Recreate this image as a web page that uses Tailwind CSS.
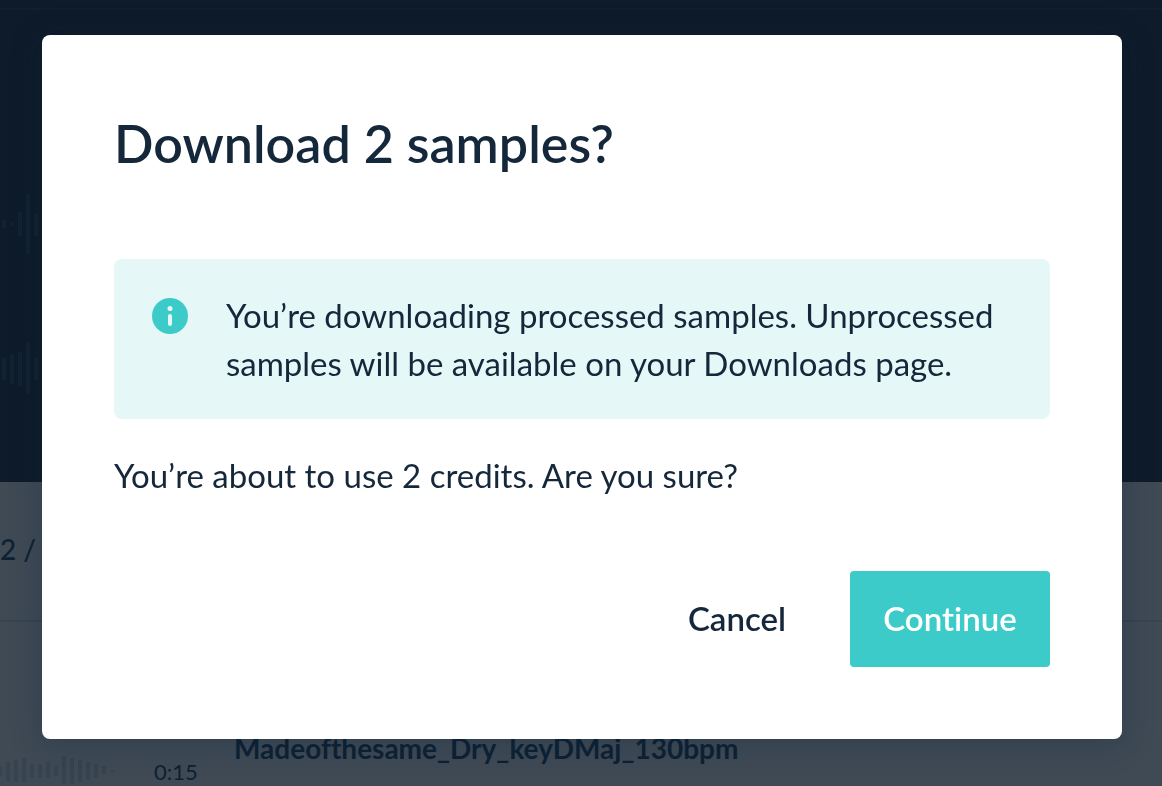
<!DOCTYPE html>
<html lang="en">
<head>
<meta charset="utf-8">
<meta name="viewport" content="width=device-width, initial-scale=1">
<title>Download samples</title>
<script src="https://cdn.jsdelivr.net/npm/@tailwindcss/browser@4"></script>
</head>
<body class="h-screen overflow-hidden bg-[#3f4a55] font-['Lato',sans-serif] text-[#0e2133] [font-variant-ligatures:none]">
  <!-- Dimmed page behind the dialog -->
  <div class="flex min-h-screen flex-col" aria-hidden="true">
    <section class="h-[482px] bg-[#0e1b2a] pt-2">
      <div class="border-t-2 border-[#12202e] pt-[184px] text-[#122231]">
        <svg class="block" width="40" height="60" viewBox="0 0 40 60" fill="currentColor">
          <rect x="2" y="26" width="4" height="8"/><rect x="10" y="28" width="4" height="4" rx="1"/><rect x="18" y="18" width="4" height="24"/><rect x="26" y="0" width="4" height="60"/><rect x="34" y="20" width="4" height="22"/>
        </svg>
        <svg class="mt-[88px] block" width="40" height="52" viewBox="0 0 40 52" fill="currentColor">
          <rect x="2" y="16" width="4" height="22"/><rect x="10" y="12" width="4" height="30"/><rect x="18" y="10" width="4" height="34"/><rect x="26" y="0" width="4" height="52"/><rect x="34" y="16" width="4" height="22"/>
        </svg>
      </div>
    </section>
    <section class="flex h-[140px] items-center border-b-2 border-[#374451] pb-1">
      <span class="text-[28px] font-medium leading-8">2 /</span>
    </section>
    <section class="flex pt-[110px]">
      <svg class="mt-6 block shrink-0 text-[#364350]" width="114" height="28" viewBox="0 0 114 28" fill="currentColor">
        <rect x="0" y="10" width="2" height="10"/><rect x="6" y="6" width="4" height="19"/><rect x="14" y="4" width="4" height="22"/><rect x="22" y="2" width="4" height="24"/><rect x="30" y="8" width="4" height="14"/><rect x="38" y="8" width="4" height="14"/><rect x="46" y="6" width="4" height="16"/><rect x="54" y="10" width="4" height="10"/><rect x="62" y="0" width="4" height="28"/><rect x="70" y="2" width="4" height="26"/><rect x="78" y="4" width="4" height="22"/><rect x="86" y="6" width="4" height="18"/><rect x="94" y="8" width="4" height="14"/><rect x="102" y="10" width="4" height="8"/><rect x="110" y="14" width="4" height="2"/>
      </svg>
      <span class="ml-10 mt-6 w-20 shrink-0 text-[22px] leading-8">0:15</span>
      <span class="text-[28px] font-bold leading-8">Madeofthesame_Dry_keyDMaj_130bpm</span>
    </section>
  </div>

  <div class="fixed inset-0 pt-[35px] pr-10 pl-[42px]">
    <div role="dialog" aria-modal="true" aria-labelledby="dialog-title" class="rounded-lg bg-white p-[72px] text-[#15273a] shadow-[0_4px_32px_rgba(10,35,60,0.3)]">
      <h1 id="dialog-title" class="text-[52px] font-semibold leading-[72px]">Download 2 samples?</h1>
      <div class="mt-20 flex items-start gap-[38px] rounded-lg bg-[#e5f7f7] py-8 pr-8 pl-[38px]">
        <svg class="mt-[7px] size-9 shrink-0" viewBox="0 0 36 36" aria-hidden="true">
          <circle cx="18" cy="18" r="18" fill="#3dcbca"/>
          <circle cx="18" cy="10.5" r="2.5" fill="#e5f7f7"/>
          <rect x="16" y="16" width="4" height="12" rx="2" fill="#e5f7f7"/>
        </svg>
        <p class="text-[33px] leading-12">You’re downloading processed samples. Unprocessed samples will be available on your Downloads page.</p>
      </div>
      <p class="mt-8 text-[33px] leading-12">You’re about to use 2 credits. Are you sure?</p>
      <div class="mt-[72px] flex justify-end gap-8">
        <button type="button" class="h-24 px-8 text-[33px] font-semibold">Cancel</button>
        <button type="button" class="h-24 min-w-[200px] rounded bg-[#3dcbca] px-8 text-[33px] font-semibold text-white">Continue</button>
      </div>
    </div>
  </div>
</body>
</html>
